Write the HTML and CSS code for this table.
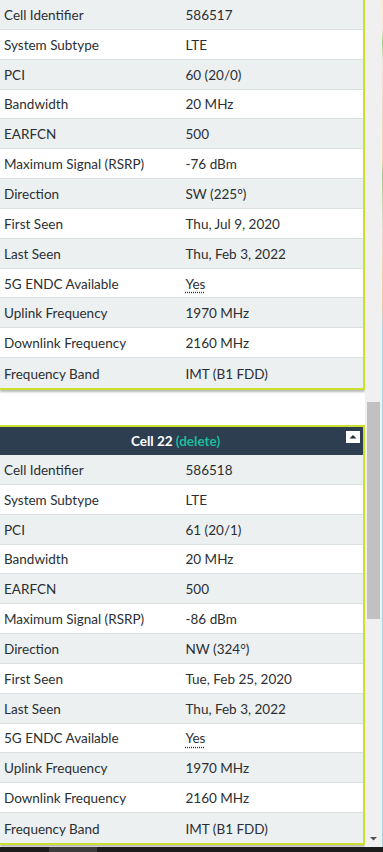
FILE: index.html
```html
<!DOCTYPE html>
<html lang="en">
<head>
<meta charset="utf-8">
<title>Cells</title>
<link rel="stylesheet" href="styles.css">
</head>
<body>
<div class="frame">
  <div class="viewport">
    <div class="scroller">
      <div class="cells">
        <section class="card">
          <div class="rows">
            <div class="row"><span class="k">Cell Identifier</span><span class="v">586517</span></div>
            <div class="row"><span class="k">System Subtype</span><span class="v">LTE</span></div>
            <div class="row"><span class="k">PCI</span><span class="v">60 (20/0)</span></div>
            <div class="row"><span class="k">Bandwidth</span><span class="v">20 MHz</span></div>
            <div class="row"><span class="k">EARFCN</span><span class="v">500</span></div>
            <div class="row"><span class="k">Maximum Signal (RSRP)</span><span class="v">-76 dBm</span></div>
            <div class="row"><span class="k">Direction</span><span class="v">SW (225°)</span></div>
            <div class="row"><span class="k">First Seen</span><span class="v">Thu, Jul 9, 2020</span></div>
            <div class="row"><span class="k">Last Seen</span><span class="v">Thu, Feb 3, 2022</span></div>
            <div class="row"><span class="k">5G ENDC Available</span><span class="v"><abbr title="E-UTRAN New Radio Dual Connectivity">Yes</abbr></span></div>
            <div class="row"><span class="k">Uplink Frequency</span><span class="v">1970 MHz</span></div>
            <div class="row"><span class="k">Downlink Frequency</span><span class="v">2160 MHz</span></div>
            <div class="row"><span class="k">Frequency Band</span><span class="v">IMT (B1 FDD)</span></div>
          </div>
        </section>

        <section class="card">
          <header class="card-head">
            <span class="title">Cell 22 <a class="del">(delete)</a></span>
            <button class="collapse" type="button" aria-label="Collapse">
              <svg width="14" height="12" viewBox="0 0 14 12"><path d="M3.5 7.5 L7 4 L10.5 7.5 Z" fill="#1f2d3a"/></svg>
            </button>
          </header>
          <div class="rows">
            <div class="row"><span class="k">Cell Identifier</span><span class="v">586518</span></div>
            <div class="row"><span class="k">System Subtype</span><span class="v">LTE</span></div>
            <div class="row"><span class="k">PCI</span><span class="v">61 (20/1)</span></div>
            <div class="row"><span class="k">Bandwidth</span><span class="v">20 MHz</span></div>
            <div class="row"><span class="k">EARFCN</span><span class="v">500</span></div>
            <div class="row"><span class="k">Maximum Signal (RSRP)</span><span class="v">-86 dBm</span></div>
            <div class="row"><span class="k">Direction</span><span class="v">NW (324°)</span></div>
            <div class="row"><span class="k">First Seen</span><span class="v">Tue, Feb 25, 2020</span></div>
            <div class="row"><span class="k">Last Seen</span><span class="v">Thu, Feb 3, 2022</span></div>
            <div class="row"><span class="k">5G ENDC Available</span><span class="v"><abbr title="E-UTRAN New Radio Dual Connectivity">Yes</abbr></span></div>
            <div class="row"><span class="k">Uplink Frequency</span><span class="v">1970 MHz</span></div>
            <div class="row"><span class="k">Downlink Frequency</span><span class="v">2160 MHz</span></div>
            <div class="row"><span class="k">Frequency Band</span><span class="v">IMT (B1 FDD)</span></div>
          </div>
        </section>
      </div>

      <div class="vbar">
        <div class="vthumb"></div>
        <div class="vspace"></div>
        <div class="vdown">
          <svg width="17" height="17" viewBox="0 0 17 17"><path d="M5 7 L12 7 L8.5 10.5 Z" fill="#505050"/></svg>
        </div>
      </div>
    </div>
    <div class="map-edge"></div>
  </div>
  <div class="hbar"><div class="hthumb"></div></div>
</div>
</body>
</html>
```

FILE: styles.css
```css
* { box-sizing: border-box; }

html, body {
  margin: 0;
  padding: 0;
  background: #ffffff;
}

body {
  font-family: Lato, "Open Sans", Arial, sans-serif;
  font-size: 13.5px;
  color: #2b2f33;
  width: 383px;
  height: 852px;
  overflow: hidden;
}

.frame {
  display: flex;
  flex-direction: column;
  height: 852px;
}

.viewport {
  display: flex;
  height: 847px;
}

.scroller {
  display: flex;
  width: 382px;
  height: 847px;
}

/* list of cell cards */
.cells {
  width: 365px;
  overflow: hidden;
  background: #ffffff;
}

.card {
  width: 365px;
  border: 2px solid #cbdf2e;
  border-left: none;
  background: #ffffff;
  box-shadow: 0 2px 2px rgba(0, 0, 0, 0.28);
}

.card:first-child {
  border-top: none;
}

.card + .card {
  margin-top: 35px;
}

.card-head {
  position: relative;
  height: 28px;
  background: #2c3e50;
  color: #ffffff;
  font-weight: 700;
  display: flex;
  align-items: center;
  justify-content: center;
  padding-right: 12px;
}

.title {
  line-height: 28px;
  padding-top: 1px;
}

.del {
  color: #1abc9c;
  cursor: pointer;
}

.collapse {
  position: absolute;
  right: 3px;
  top: 4px;
  width: 14px;
  height: 12px;
  padding: 0;
  margin: 0;
  border: none;
  background: #ffffff;
  display: block;
}

.collapse svg {
  display: block;
}

.row {
  display: grid;
  grid-template-columns: 1fr 1fr;
  align-items: center;
  height: 29.85px;
  border-bottom: 1px solid #dadfe2;
  background: #ffffff;
}

.row:nth-child(odd) {
  background: #ecf0f1;
}

.row:last-child {
  border-bottom: none;
}

.k, .v {
  padding-left: 4px;
  padding-top: 1px;
  white-space: nowrap;
  line-height: 20px;
}

abbr {
  text-decoration: underline dotted;
  text-underline-offset: 3px;
  cursor: help;
}

/* vertical scrollbar of the panel */
.vbar {
  width: 17px;
  background: #f0f0f0;
  display: flex;
  flex-direction: column;
  padding-top: 402px;
}

.vthumb {
  height: 217px;
  margin-left: 2px;
  width: 13px;
  background: #c1c1c1;
}

.vspace {
  flex: 1;
}

.vdown {
  height: 17px;
}

.vdown svg {
  display: block;
}

/* sliver of the map behind the panel */
.map-edge {
  width: 1px;
  background: linear-gradient(#f6f1c8 0, #eee8dd 30px, #9fd17c 42px, #e9e5dc 60px, #f3d4b8 160px, #a7c98a 175px, #e6dfd6 230px, #f7c79c 300px, #aad3df 330px, #aad3df 847px);
}

/* horizontal scrollbar strip */
.hbar {
  height: 5px;
  background: #1c1c1c;
  padding-left: 49px;
}

.hthumb {
  width: 48px;
  height: 5px;
  background: #3b3b3b;
}
```
